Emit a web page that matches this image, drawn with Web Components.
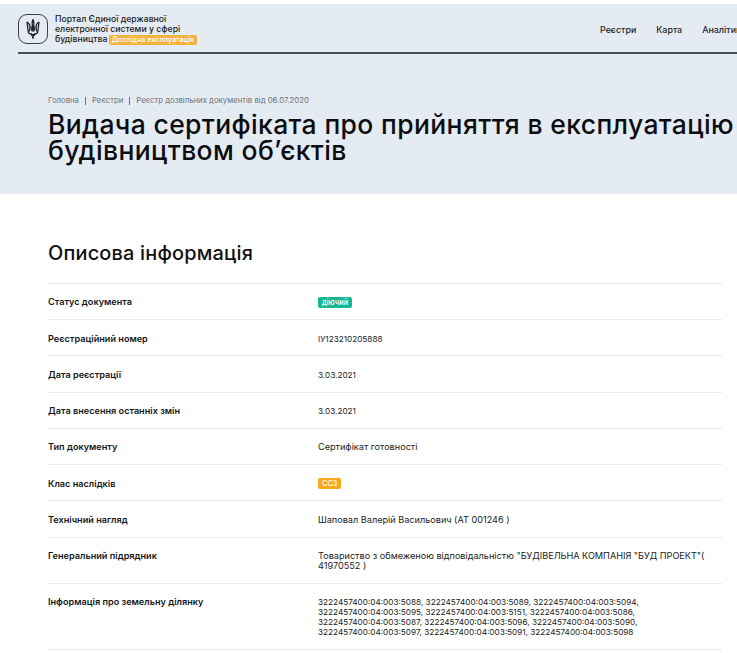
<!DOCTYPE html>
<html lang="uk"><head><meta charset="utf-8"><title>Видача сертифіката</title>
<style>
html,body{margin:0;padding:0;overflow:hidden;height:653px;background:#fff}
body{font-family:Inter,"Liberation Sans",sans-serif;color:#111}
</style></head><body>
<site-hero></site-hero>
<info-section heading="Описова інформація">
<info-row label="Статус документа"><status-badge tone="green">діючий</status-badge></info-row>
<info-row label="Реєстраційний номер" num>ІУ123210205888</info-row>
<info-row label="Дата реєстрації" num>3.03.2021</info-row>
<info-row label="Дата внесення останніх змін" num>3.03.2021</info-row>
<info-row label="Тип документу">Сертифікат готовності</info-row>
<info-row label="Клас наслідків"><status-badge tone="orange">СС3</status-badge></info-row>
<info-row label="Технічний нагляд">Шаповал Валерій Васильович (АТ 001246 )</info-row>
<info-row label="Генеральний підрядник">Товариство з обмеженою відповідальністю "БУДІВЕЛЬНА КОМПАНІЯ "БУД ПРОЕКТ"( 41970552 )</info-row>
<info-row label="Інформація про земельну ділянку" num>3222457400:04:003:5088, 3222457400:04:003:5089, 3222457400:04:003:5094, 3222457400:04:003:5095, 3222457400:04:003:5151, 3222457400:04:003:5086, 3222457400:04:003:5087, 3222457400:04:003:5096, 3222457400:04:003:5090, 3222457400:04:003:5097, 3222457400:04:003:5091, 3222457400:04:003:5098</info-row>
</info-section>
<script>
function def(name,html,init){customElements.define(name,class extends HTMLElement{constructor(){super();this.attachShadow({mode:'open'}).innerHTML=html;}connectedCallback(){if(init)init(this)}})}
def('site-hero',`<style>
:host{display:block;margin-top:4px;height:190px;background:#e5ebf2;overflow:hidden}
.bar{display:flex;align-items:center;height:46px;padding-top:2px;margin-left:18px;border-bottom:2px solid #4b5056;width:719px;overflow:hidden}
.logo{width:30px;height:30px;border:1px solid #3c3f44;border-radius:9px;box-sizing:border-box;display:flex;align-items:center;justify-content:center;flex:none;margin-right:7px}
.title{font-size:8.7px;line-height:10.2px;font-weight:500;color:#1b1d21;width:180px;white-space:nowrap;padding-top:1px}
.tag{display:inline-block;background:#f3b33f;color:#fff;font-size:7.2px;line-height:9.500px;padding:0 3px;border-radius:2px;margin-left:-1px}
nav{display:flex;gap:20px;margin-left:auto;font-size:8.9px;font-weight:500;color:#1b1d21;width:137px;white-space:nowrap}
.crumbs{display:flex;align-items:center;margin:41px 0 0 48px;font-size:7.75px;line-height:10px;color:#6c7278;white-space:nowrap}
.crumbs i{width:1px;height:8px;background:#6c7278;margin:2px 6px 0 6px}
h1{margin:6px 0 0 48px;font-size:26.500px;line-height:26px;font-weight:500;color:#0c0d0f;white-space:nowrap;letter-spacing:.36px}
</style>
<div class="bar"><span class="logo"><svg width="14" height="20" viewBox="0 0 14 20" fill="none" stroke="#1f2226" stroke-width="1.3"><path d="M7 .6c.9 1.700 1 3.300.7 5.300L7 12.600l-.7-6.700C6 3.900 6.100 2.300 7 .6z"/><path d="M1 3 2.200 12.500c.1 1.400 1.100 2.300 2.500 2.300h1.100M13 3l-1.200 9.500c-.1 1.400-1.100 2.300-2.500 2.300H8.200"/><path d="M1 3c1.700.9 2.900 2.700 3 5 .1 1.700-.4 3.400-1.300 4.600M13 3c-1.700.9-2.900 2.700-3 5-.1 1.700.4 3.400 1.300 4.600"/><path d="M4.900 7.500c.9 1.300 1.100 3 .8 4.600M9.100 7.500c-.9 1.300-1.100 3-.8 4.600"/><path d="M5 15l2 2 2-2M7 15v4.600" stroke-width="1.900"/></svg></span>
<div class="title">Портал Єдиної державної<br>електронної системи у сфері<br>будівництва <span class="tag">Дослідна експлуатація</span></div>
<nav><span>Реєстри</span><span>Карта</span><span>Аналітика</span></nav></div>
<div class="crumbs"><span>Головна</span><i></i><span>Реєстри</span><i></i><span>Реєстр дозвільних документів від 06.07.2020</span></div>
<h1>Видача сертифіката про прийняття в експлуатацію<br>будівництвом об’єктів</h1>`);
def('info-section',`<style>
:host{display:block;margin:0 15px 0 48px;padding-top:47px}
h2{margin:0 0 18px;font-size:19.900px;line-height:24px;font-weight:500;color:#111;letter-spacing:.2px}
.rows{border-top:1px solid #e6ebf0}
</style><h2></h2><div class="rows"><slot></slot></div>`,el=>{el.shadowRoot.querySelector('h2').textContent=el.getAttribute('heading')});
def('info-row',`<style>
:host{display:grid;grid-template-columns:270px 1fr;border-bottom:1px solid #e6ebf0;padding:13.4px 0 11.85px;font-size:9.15px;line-height:10px;color:#222}
:host([num]) .v{font-size:8.2px}
.l{font-weight:600;color:#16181b}
.v{min-height:10px}
</style><div class="l"></div><div class="v"><slot></slot></div>`,el=>{el.shadowRoot.querySelector('.l').textContent=el.getAttribute('label')});
def('status-badge',`<style>
:host{display:inline-block;font-size:7.4px;line-height:11px;font-weight:500;color:#fff;padding:0 4px;border-radius:2px;vertical-align:top;margin:-.5px 0}
:host([tone=green]){background:#16b795}
:host([tone=orange]){background:#f7a81b}
</style><slot></slot>`);
</script>
</body></html>
